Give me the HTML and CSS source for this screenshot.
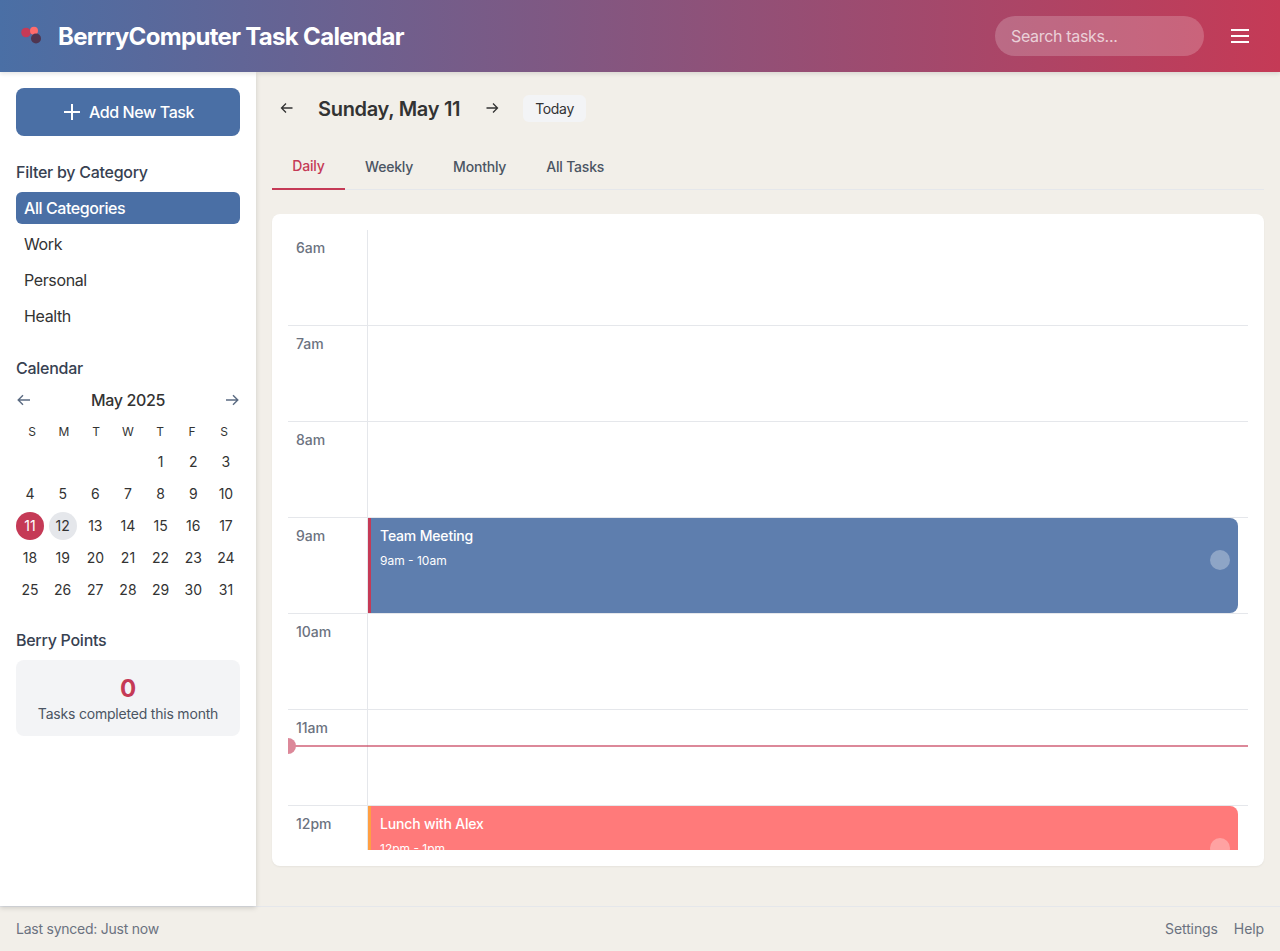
FILE: index.html
```html
<!DOCTYPE html>
<html lang="en">
<head>
<meta charset="utf-8">
<title>BerrryComputer Task Calendar</title>
<link rel="stylesheet" href="styles.css">
</head>
<body>
<div class="app">
  <header class="topbar">
    <div class="brand">
      <svg class="logo" width="32" height="32" viewBox="0 0 32 32"><circle cx="10" cy="12.5" r="4.8" fill="#c53a56"/><circle cx="18" cy="10.7" r="4" fill="#ff6b6b"/><circle cx="20" cy="18.5" r="5" fill="#4f3550"/></svg>
      <h1 class="brand-name">BerrryComputer Task Calendar</h1>
    </div>
    <div class="top-actions">
      <input class="search" type="text" placeholder="Search tasks...">
      <button class="menu-btn" aria-label="Menu"><svg width="24" height="24" viewBox="0 0 24 24" fill="none" stroke="#fff" stroke-width="2"><path d="M3 6h18M3 12h18M3 18h18"/></svg></button>
    </div>
  </header>
  <div class="body-row">
    <aside class="sidebar">
      <button class="add-btn"><svg width="24" height="24" viewBox="0 0 24 24" fill="none" stroke="#fff" stroke-width="2"><path d="M12 4v16M4 12h16"/></svg><span>Add New Task</span></button>
      <section class="side-section">
        <h2 class="side-title">Filter by Category</h2>
        <ul class="cat-list">
          <li class="cat active">All Categories</li>
          <li class="cat">Work</li>
          <li class="cat">Personal</li>
          <li class="cat">Health</li>
        </ul>
      </section>
      <section class="side-section">
        <h2 class="side-title">Calendar</h2>
        <div class="cal-head">
          <svg width="16" height="16" viewBox="0 0 16 16" fill="none" stroke="#5b6b82" stroke-width="1.4"><path d="M14 8H2.5M7 3.2 2.2 8 7 12.8"/></svg>
          <span class="cal-month">May 2025</span>
          <svg width="16" height="16" viewBox="0 0 16 16" fill="none" stroke="#5b6b82" stroke-width="1.4"><path d="M2 8h11.5M9 3.2 13.8 8 9 12.8"/></svg>
        </div>
        <div class="cal-week"><span>S</span><span>M</span><span>T</span><span>W</span><span>T</span><span>F</span><span>S</span></div>
        <div class="cal-days">
          <span></span><span></span><span></span><span></span><span>1</span><span>2</span><span>3</span>
          <span>4</span><span>5</span><span>6</span><span>7</span><span>8</span><span>9</span><span>10</span>
          <span class="day-current">11</span><span class="day-next">12</span><span>13</span><span>14</span><span>15</span><span>16</span><span>17</span>
          <span>18</span><span>19</span><span>20</span><span>21</span><span>22</span><span>23</span><span>24</span>
          <span>25</span><span>26</span><span>27</span><span>28</span><span>29</span><span>30</span><span>31</span>
        </div>
      </section>
      <section class="side-section">
        <h2 class="side-title">Berry Points</h2>
        <div class="points">
          <div class="points-num">0</div>
          <div class="points-label">Tasks completed this month</div>
        </div>
      </section>
    </aside>
    <main class="main">
      <div class="date-row">
        <button class="nav-btn" aria-label="Previous day"><svg width="16" height="16" viewBox="0 0 16 16" fill="none" stroke="#333" stroke-width="1.3"><path d="M12.5 8H1.5M6 3.5 1.5 8 6 12.5"/></svg></button>
        <h2 class="date-title">Sunday, May 11</h2>
        <button class="nav-btn" aria-label="Next day"><svg width="16" height="16" viewBox="0 0 16 16" fill="none" stroke="#333" stroke-width="1.3"><path d="M2.5 8h11M9 3.5 13.5 8 9 12.5"/></svg></button>
        <button class="today-btn">Today</button>
      </div>
      <nav class="tabs">
        <button class="tab active">Daily</button>
        <button class="tab">Weekly</button>
        <button class="tab">Monthly</button>
        <button class="tab">All Tasks</button>
      </nav>
      <div class="card">
        <div class="timeline">
          <div class="hour"><div class="hour-label">6am</div><div class="hour-slot"></div></div>
          <div class="hour"><div class="hour-label">7am</div><div class="hour-slot"></div></div>
          <div class="hour"><div class="hour-label">8am</div><div class="hour-slot"></div></div>
          <div class="hour"><div class="hour-label">9am</div><div class="hour-slot">
            <div class="event event-blue"><div class="event-title">Team Meeting</div><div class="event-time">9am - 10am</div><span class="event-check"></span></div>
          </div></div>
          <div class="hour"><div class="hour-label">10am</div><div class="hour-slot"></div></div>
          <div class="hour"><div class="hour-label">11am</div><div class="hour-slot"></div></div>
          <div class="hour"><div class="hour-label">12pm</div><div class="hour-slot">
            <div class="event event-coral"><div class="event-title">Lunch with Alex</div><div class="event-time">12pm - 1pm</div><span class="event-check"></span></div>
          </div></div>
          <div class="now-line"></div>
        </div>
      </div>
    </main>
  </div>
  <footer class="footer">
    <span>Last synced: Just now</span>
    <div class="footer-links"><span>Settings</span><span>Help</span></div>
  </footer>
</div>
</body>
</html>
```
FILE: styles.css
```css
* { box-sizing: border-box; }
html, body { margin: 0; height: 100%; }
body { font-family: Inter, "Liberation Sans", sans-serif; color: #333; background: #f2efe9; overflow: hidden; }
h1, h2, ul { margin: 0; padding: 0; }
button { font-family: inherit; border: 0; background: none; padding: 0; cursor: pointer; }
.app { display: flex; flex-direction: column; height: 951px; }

.topbar { height: 72px; flex: none; display: flex; align-items: center; justify-content: space-between; padding: 0 16px; background: linear-gradient(90deg, #4a6fa5, #c53a56); box-shadow: 0 2px 4px rgba(0,0,0,.1); position: relative; z-index: 3; }
.brand { display: flex; align-items: center; gap: 10px; }
.logo { display: block; }
.brand-name { font-size: 24px; font-weight: 700; color: #fff; line-height: 32px; letter-spacing: -.68px; margin-top: 2px; }
.top-actions { display: flex; align-items: center; gap: 24px; }
.search { width: 209px; height: 40px; border: 0; border-radius: 20px; padding: 0 16px; font: 400 16px Inter, sans-serif; letter-spacing: -.33px; background: rgba(255,255,255,.2); color: #fff; outline: 0; }
.search::placeholder { color: rgba(255,255,255,.7); opacity: 1; }
.menu-btn { width: 24px; height: 24px; margin-right: 12px; display: block; }
.menu-btn svg { display: block; }

.body-row { flex: 1; min-height: 0; display: flex; }
.sidebar { width: 256px; flex: none; background: #fff; padding: 16px; box-shadow: 0 2px 5px rgba(0,0,0,.15); position: relative; z-index: 2; }
.add-btn { width: 100%; height: 48px; border-radius: 8px; background: #4a6fa5; color: #fff; font-size: 16px; font-weight: 500; letter-spacing: -.4px; display: flex; align-items: center; justify-content: center; gap: 5px; padding-right: 2px; }
.side-section { margin-top: 24px; }
.side-title { font-size: 16px; font-weight: 500; line-height: 24px; letter-spacing: -.27px; color: #374151; margin-bottom: 8px; }
.cat-list { list-style: none; display: flex; flex-direction: column; gap: 4px; }
.cat { height: 32px; line-height: 32px; padding: 0 8px; border-radius: 6px; font-size: 16px; letter-spacing: -.37px; color: #333; }
.cat.active { background: #4a6fa5; color: #fff; font-weight: 500; letter-spacing: -.43px; }

.cal-head { display: flex; align-items: center; justify-content: space-between; height: 24px; margin-bottom: 12px; }
.cal-head svg { display: block; }
.cal-month { font-size: 16px; font-weight: 500; letter-spacing: -.37px; color: #333; }
.cal-week { display: grid; grid-template-columns: repeat(7, 1fr); text-align: center; font-size: 12px; line-height: 16px; color: #333; margin-bottom: 8px; }
.cal-days { display: grid; grid-template-columns: repeat(7, 28px); justify-content: space-between; row-gap: 4px; }
.cal-days span { height: 28px; width: 28px; line-height: 28px; text-align: center; font-size: 14px; color: #333; border-radius: 50%; }
.cal-days .day-current { background: #c53a56; color: #fff; }
.cal-days .day-next { background: #e5e7eb; }

.points { height: 76px; background: #f3f4f6; border-radius: 8px; padding: 13px 8px 0; text-align: center; }
.points-num { font-size: 24px; font-weight: 700; line-height: 31px; color: #c53a56; }
.points-label { font-size: 14px; line-height: 20px; letter-spacing: -.2px; color: #4b5563; }

.main { flex: 1; min-width: 0; display: flex; flex-direction: column; padding: 16px 16px 40px; }
.date-row { height: 40px; flex: none; display: flex; align-items: center; }
.nav-btn { width: 32px; height: 32px; display: flex; align-items: center; justify-content: center; }
.date-title { font-size: 20px; font-weight: 600; line-height: 28px; letter-spacing: -.3px; color: #333; margin: 2px 16px 0 14px; }
.today-btn { margin-left: 15px; height: 27px; padding: 0 12px; border-radius: 6px; background: #f3f4f6; font-size: 14px; letter-spacing: -.35px; color: #333; }

.tabs { display: flex; height: 46px; flex: none; margin-top: 16px; border-bottom: 1px solid #e5e7eb; }
.tab { padding: 0 20px; font-size: 14px; font-weight: 500; letter-spacing: -.2px; color: #4b5563; height: 45px; }
.tab.active { width: 73px; color: #c53a56; border-bottom: 2px solid #c53a56; height: 46px; padding-bottom: 1px; }

.card { flex: 1; min-height: 0; margin-top: 24px; background: #fff; border-radius: 8px; padding: 16px; box-shadow: 0 1px 2px rgba(0,0,0,.05); }
.timeline { height: 100%; overflow: hidden; position: relative; }
.hour { display: grid; grid-template-columns: 80px 1fr; height: 96px; border-bottom: 1px solid #e5e7eb; }
.hour-label { border-right: 1px solid #e5e7eb; padding: 8px; font-size: 14px; font-weight: 500; line-height: 20px; color: #6b7280; }
.hour-slot { min-width: 0; }
.event { position: relative; height: 95px; margin-right: 10px; padding: 8px 8px 8px 9px; color: #fff; border-left: 3px solid; border-radius: 0 8px 8px 0; }
.event-blue { background: #5e7eae; border-color: #c53a56; }
.event-coral { background: #ff7a7a; border-color: #ff9f43; }
.event-title { font-size: 14px; font-weight: 500; line-height: 20px; letter-spacing: -.17px; margin-bottom: 5px; }
.event-time { font-size: 12px; line-height: 20px; }
.event-check { position: absolute; right: 8px; top: 32px; width: 20px; height: 20px; border-radius: 50%; background: rgba(255,255,255,.3); }
.now-line { position: absolute; left: 0; right: 0; top: 515px; height: 2px; background: #c53a56; opacity: .6; }
.now-line::before { content: ""; position: absolute; left: -8px; top: -7px; width: 16px; height: 16px; border-radius: 50%; background: #c53a56; }

.footer { height: 45px; flex: none; display: flex; align-items: center; justify-content: space-between; padding: 0 16px 1px; border-top: 1px solid #e5e7eb; font-size: 14px; letter-spacing: -.24px; color: #6b7280; }
.footer-links { display: flex; gap: 16px; letter-spacing: -.1px; }
```
